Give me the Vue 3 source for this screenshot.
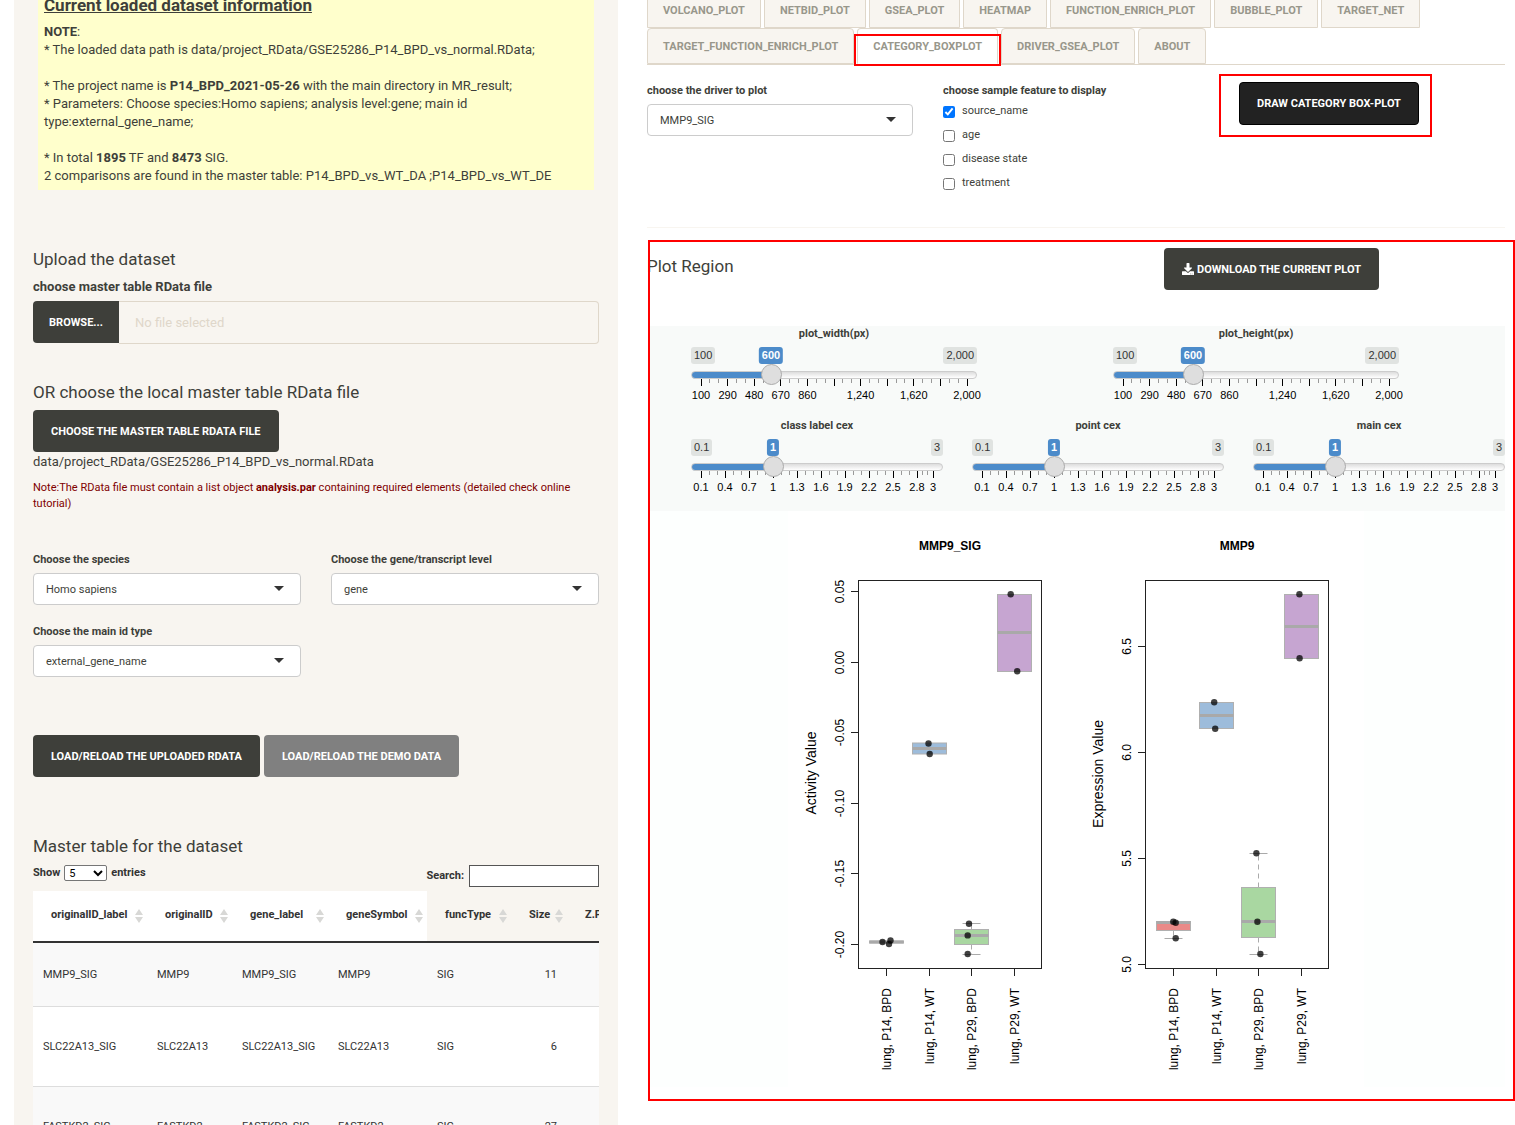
<script setup>
import { ref } from 'vue'

const tabs = [
  'VOLCANO_PLOT', 'NETBID_PLOT', 'GSEA_PLOT', 'HEATMAP', 'FUNCTION_ENRICH_PLOT', 'BUBBLE_PLOT',
  'TARGET_NET', 'TARGET_FUNCTION_ENRICH_PLOT', 'CATEGORY_BOXPLOT', 'DRIVER_GSEA_PLOT', 'ABOUT'
]
const activeTab = ref('CATEGORY_BOXPLOT')

const features = ref([
  { name: 'source_name', on: true },
  { name: 'age', on: false },
  { name: 'disease state', on: false },
  { name: 'treatment', on: false }
])

const columns = [
  { name: 'originalID_label', width: 114 },
  { name: 'originalID', width: 85 },
  { name: 'gene_label', width: 96 },
  { name: 'geneSymbol', width: 99 },
  { name: 'funcType', width: 84 },
  { name: 'Size', width: 56 },
  { name: 'Z.P', width: 80 }
]
const rows = [
  ['MMP9_SIG', 'MMP9', 'MMP9_SIG', 'MMP9', 'SIG', '11', ''],
  ['SLC22A13_SIG', 'SLC22A13', 'SLC22A13_SIG', 'SLC22A13', 'SIG', '6', ''],
  ['FASTKD2_SIG', 'FASTKD2', 'FASTKD2_SIG', 'FASTKD2', 'SIG', '27', '']
]

const fmt = (n) => n.toLocaleString('en-US')

function scale(min, max, step, hidden) {
  const majors = []
  for (let v = min; v < max - step / 10; v += step) majors.push(Math.round(v * 10) / 10)
  majors.push(max)
  const pct = (v) => ((v - min) / (max - min)) * 100
  const ticks = []
  majors.forEach((v, i) => {
    ticks.push({ x: pct(v), major: true, text: hidden.includes(v) ? '' : fmt(v) })
    if (i < majors.length - 1) {
      const gap = (majors[i + 1] - v) / 3
      ticks.push({ x: pct(v + gap), major: false, text: '' })
      ticks.push({ x: pct(v + 2 * gap), major: false, text: '' })
    }
  })
  return ticks
}
const pxTicks = scale(100, 2000, 190, [1050, 1430, 1810])
const cexTicks = scale(0.1, 3, 0.3, [])

const sliderRows = ref([
  {
    kind: 'px',
    items: [
      { id: 'pw', label: 'plot_width(px)', min: 100, max: 2000, step: 1, value: 600, ticks: pxTicks },
      { id: 'ph', label: 'plot_height(px)', min: 100, max: 2000, step: 1, value: 600, ticks: pxTicks }
    ]
  },
  {
    kind: 'cex',
    items: [
      { id: 'cc', label: 'class label cex', min: 0.1, max: 3, step: 0.1, value: 1, ticks: cexTicks },
      { id: 'pc', label: 'point cex', min: 0.1, max: 3, step: 0.1, value: 1, ticks: cexTicks },
      { id: 'mc', label: 'main cex', min: 0.1, max: 3, step: 0.1, value: 1, ticks: cexTicks }
    ]
  }
])
const frac = (s) => (s.value - s.min) / (s.max - s.min)

const groups = ['lung, P14, BPD', 'lung, P14, WT', 'lung, P29, BPD', 'lung, P29, WT']
const groupX = [98.5, 141.5, 183.5, 226.5]
const fills = ['#ea8a88', '#9dbcdb', '#a9d7a1', '#c6a5d1']

const plots = [
  {
    title: 'MMP9_SIG', axis: 'Activity Value', dx: 0, axisY: 262,
    ticks: [[80.5, '0.05'], [151.5, '0.00'], [221.5, '-0.05'], [292.5, '-0.10'], [362.5, '-0.15'], [433.5, '-0.20']],
    boxes: [
      { top: 430, bottom: 432, mid: 431, lo: 0, hi: 0, pts: [[94.5, 431], [102.5, 429.5], [101, 433]] },
      { top: 232, bottom: 243, mid: 237.5, lo: 0, hi: 0, pts: [[140.5, 232.5], [141.7, 243]] },
      { top: 418.5, bottom: 433.5, mid: 424.5, lo: 443.5, hi: 412.5, pts: [[181, 412.8], [179.7, 424.4], [179.7, 443]] },
      { top: 83.5, bottom: 160.5, mid: 121.5, lo: 0, hi: 0, pts: [[222.7, 83.2], [229.2, 160.3]] }
    ]
  },
  {
    title: 'MMP9', axis: 'Expression Value', dx: 287, axisY: 263,
    ticks: [[135.5, '6.5'], [241.5, '6.0'], [347.5, '5.5'], [453.5, '5.0']],
    boxes: [
      { top: 410.5, bottom: 419.5, mid: 411.5, lo: 427.5, hi: 0, pts: [[98.3, 410.7], [100.7, 411.7], [100.7, 427.3]] },
      { top: 191.5, bottom: 217.5, mid: 204.5, lo: 0, hi: 0, pts: [[139.2, 191.3], [140.2, 217.7]] },
      { top: 376.5, bottom: 426.5, mid: 410.5, lo: 443.5, hi: 342.5, pts: [[181.4, 342.3], [182.4, 410.7], [185.4, 443]] },
      { top: 83.5, bottom: 147.5, mid: 115.5, lo: 0, hi: 0, pts: [[224.4, 83.3], [224.6, 147.3]] }
    ]
  }
]
</script>

<template>
  <div class="page">
    <aside class="side">
      <div class="info">
        <h4>Current loaded dataset information</h4>
        <p>
          <b>NOTE</b>:<br>
          * The loaded data path is data/project_RData/GSE25286_P14_BPD_vs_normal.RData;<br>
          <br>
          * The project name is <b>P14_BPD_2021-05-26</b> with the main directory in MR_result;<br>
          * Parameters: Choose species:Homo sapiens; analysis level:gene; main id<br>
          type:external_gene_name;<br>
          <br>
          * In total <b>1895</b> TF and <b>8473</b> SIG.<br>
          2 comparisons are found in the master table: P14_BPD_vs_WT_DA ;P14_BPD_vs_WT_DE
        </p>
      </div>

      <h3 class="upload-title">Upload the dataset</h3>
      <label class="file-label" for="file-name">choose master table RData file</label>
      <div class="file-row">
        <button class="btn browse">Browse...</button>
        <input id="file-name" type="text" placeholder="No file selected" readonly>
      </div>

      <h3 class="local-title">OR choose the local master table RData file</h3>
      <button class="btn">Choose the master table RData file</button>
      <p class="path">data/project_RData/GSE25286_P14_BPD_vs_normal.RData</p>
      <p class="warn">Note:The RData file must contain a list object <b>analysis.par</b> containing required elements (detailed check online tutorial)</p>

      <div class="choices">
        <div class="field">
          <label for="species">Choose the species</label>
          <div class="select"><select id="species"><option>Homo sapiens</option></select></div>
        </div>
        <div class="field">
          <label for="level">Choose the gene/transcript level</label>
          <div class="select"><select id="level"><option>gene</option></select></div>
        </div>
        <div class="field">
          <label for="idtype">Choose the main id type</label>
          <div class="select"><select id="idtype"><option>external_gene_name</option></select></div>
        </div>
      </div>

      <div class="load-row">
        <button class="btn">Load/Reload the uploaded RData</button>
        <button class="btn demo">Load/Reload the demo data</button>
      </div>

      <h3 class="table-title">Master table for the dataset</h3>
      <div class="table-tools">
        <label class="length">Show <select><option>5</option></select> entries</label>
        <label class="search">Search: <input type="search"></label>
      </div>
      <div class="table-wrap">
        <table>
          <colgroup>
            <col v-for="c in columns" :key="c.name" :style="{ width: c.width + 'px' }">
          </colgroup>
          <thead>
            <tr>
              <th v-for="(c, i) in columns" :key="c.name" :class="{ frozen: i < 4 }">
                {{ c.name }}
                <svg v-if="i < 6" class="sort" viewBox="0 0 8 14"><path d="M4 0 8 6H0ZM0 8H8L4 14Z" /></svg>
              </th>
            </tr>
          </thead>
          <tbody>
            <tr v-for="r in rows" :key="r[0]">
              <td v-for="(v, i) in r" :key="i" :class="{ num: i === 5 }">{{ v }}</td>
            </tr>
          </tbody>
        </table>
      </div>
    </aside>

    <main>
      <ul class="tabs">
        <li v-for="t in tabs" :key="t" :class="{ active: t === activeTab }">
          <a href="#" @click.prevent="activeTab = t">{{ t }}</a>
        </li>
      </ul>

      <div class="controls">
        <div class="field">
          <label for="driver">choose the driver to plot</label>
          <div class="select"><select id="driver"><option>MMP9_SIG</option></select></div>
        </div>
        <fieldset>
          <legend>choose sample feature to display</legend>
          <label v-for="f in features" :key="f.name"><input v-model="f.on" type="checkbox"><span>{{ f.name }}</span></label>
        </fieldset>
        <div class="draw">
          <button class="btn">Draw Category box-plot</button>
        </div>
      </div>
      <hr>

      <section class="plot">
        <header>
          <h3>Plot Region</h3>
          <div>
            <button class="btn download">
              <svg viewBox="0 0 512 512"><path fill-rule="evenodd" d="M216 0h80c13.300 0 24 10.700 24 24v168h87.700c17.800 0 26.700 21.500 14.100 34.100L269.700 378.300c-7.500 7.500-19.800 7.500-27.300 0L90.100 226.100c-12.600-12.600-3.700-34.100 14.100-34.100H192V24c0-13.300 10.700-24 24-24zm296 376v112c0 13.300-10.700 24-24 24H24c-13.300 0-24-10.700-24-24V376c0-13.300 10.700-24 24-24h146.700l49 49c20.100 20.100 52.500 20.100 72.600 0l49-49H488c13.300 0 24 10.700 24 24zm-124 88a20 20 0 1 0-40 0 20 20 0 0 0 40 0zm64 0a20 20 0 1 0-40 0 20 20 0 0 0 40 0z" /></svg>
              Download the current plot
            </button>
          </div>
        </header>

        <div class="sliders">
          <div v-for="row in sliderRows" :key="row.kind" class="slider-row" :class="row.kind">
            <div v-for="s in row.items" :key="s.id" class="slider">
              <label :for="s.id">{{ s.label }}</label>
              <div class="badges">
                <span class="badge">{{ fmt(s.min) }}</span>
                <span class="badge">{{ fmt(s.max) }}</span>
                <span class="rail"><output class="badge value" :style="{ left: frac(s) * 100 + '%' }">{{ fmt(s.value) }}</output></span>
              </div>
              <input :id="s.id" v-model.number="s.value" type="range" :min="s.min" :max="s.max" :step="s.step" :style="{ '--f': frac(s) }">
              <svg class="scale">
                <g v-for="(t, i) in s.ticks" :key="i">
                  <line :x1="t.x + '%'" :x2="t.x + '%'" y1="0" :y2="t.major ? 7 : 4" :class="{ major: t.major }" />
                  <text v-if="t.text" :x="t.x + '%'" y="20">{{ t.text }}</text>
                </g>
              </svg>
            </div>
          </div>
        </div>

        <div class="figure">
          <svg viewBox="0 0 576 576" width="576" height="576">
            <g v-for="p in plots" :key="p.title" :transform="`translate(${p.dx} 0)`">
              <text class="title" x="162" y="39">{{ p.title }}</text>
              <text class="axis" :transform="`translate(28 ${p.axisY}) rotate(-90)`">{{ p.axis }}</text>
              <g v-for="t in p.ticks" :key="t[1]">
                <line class="ink" x1="63" x2="70" :y1="t[0]" :y2="t[0]" />
                <text :transform="`translate(56 ${t[0]}) rotate(-90)`">{{ t[1] }}</text>
              </g>
              <g v-for="(b, i) in p.boxes" :key="i">
                <g v-if="b.hi">
                  <line class="dash" :x1="groupX[i]" :x2="groupX[i]" :y1="b.top" :y2="b.hi" />
                  <line class="whisker" :x1="groupX[i] - 9" :x2="groupX[i] + 9" :y1="b.hi" :y2="b.hi" />
                </g>
                <g v-if="b.lo">
                  <line class="dash" :x1="groupX[i]" :x2="groupX[i]" :y1="b.bottom" :y2="b.lo" />
                  <line class="whisker" :x1="groupX[i] - 9" :x2="groupX[i] + 9" :y1="b.lo" :y2="b.lo" />
                </g>
                <rect class="box" :x="groupX[i] - 17" :y="b.top" width="34" :height="b.bottom - b.top" :fill="fills[i]" />
                <line class="median" :x1="groupX[i] - 17" :x2="groupX[i] + 17" :y1="b.mid" :y2="b.mid" />
                <circle v-for="(c, k) in b.pts" :key="k" :cx="c[0]" :cy="c[1]" r="3.200" />
                <line class="ink" :x1="groupX[i]" :x2="groupX[i]" y1="457" y2="465" />
                <text class="group" :transform="`translate(${groupX[i] + 4} 477) rotate(-90)`">{{ groups[i] }}</text>
              </g>
              <rect class="frame" x="70.500" y="69.500" width="183" height="388" />
            </g>
          </svg>
        </div>
      </section>
    </main>
  </div>
</template>

<style>
html, body { background: #fff; }
</style>

<style scoped>
.page {
  display: grid;
  grid-template-columns: minmax(0, 604fr) minmax(0, 858fr);
  gap: 29px;
  height: 100vh;
  padding: 0 10px 0 14px;
  box-sizing: border-box;
  overflow: hidden;
  font: 13px/18px Roboto, sans-serif;
  color: #3e3f3a;
}
.page *, .page *::before, .page *::after { box-sizing: border-box; }
h3, h4, p, ul, fieldset { margin: 0; padding: 0; }
b { font-weight: 700; }
h3 { font-size: 17px; line-height: 20px; font-weight: 400; }
button, input, select { font-family: inherit; }

.side { padding: 0 19px; background: #f8f5f0; }
.info { margin: -19px 5px 0; padding: 14px 6px 5px; background: #ffffcc; }
.info h4 { margin-bottom: 8px; font-size: 17px; line-height: 20px; font-weight: 700; text-decoration: underline; }

.btn {
  height: 42px;
  padding: 0 17px;
  border: 1px solid transparent;
  border-radius: 4px;
  background: #3e3f3a;
  color: #fff;
  font-size: 11px;
  font-weight: 700;
  text-transform: uppercase;
  white-space: nowrap;
}
.upload-title { margin-top: 59px; }
.file-label { display: block; margin-top: 9px; font-weight: 700; }
.file-row { display: flex; margin-top: 5px; }
.browse { width: 86px; padding: 0; border-radius: 4px 0 0 4px; }
.file-row input {
  flex: 1;
  min-width: 0;
  height: 43px;
  padding: 0 16px;
  border: 1px solid #dfd7ca;
  border-left: 0;
  border-radius: 0 4px 4px 0;
  background: transparent;
  font-size: 13px;
}
.file-row input::placeholder { color: #dfd7ca; opacity: 1; }
.local-title { margin: 38px 0 8px; }
.path { margin-top: 1px; }
.warn { margin-top: 9px; font-size: 11px; line-height: 16px; color: #800000; }

.choices { display: grid; grid-template-columns: 1fr 1fr; gap: 18px 30px; margin-top: 39px; }
.field label { display: block; margin-bottom: 5px; font-size: 11px; line-height: 17px; font-weight: 700; }
.select { position: relative; }
.select::after {
  content: "";
  position: absolute;
  right: 17px;
  top: 13px;
  border: 5px solid transparent;
  border-top-color: #333;
  border-bottom-width: 0;
}
.select select {
  display: block;
  width: 100%;
  height: 32px;
  padding: 0 12px;
  appearance: none;
  border: 1px solid #ccc;
  border-radius: 4px;
  background: #fff;
  color: #3e3f3a;
  font-size: 11px;
}
.load-row { display: flex; gap: 4px; margin-top: 58px; }
.demo { background: #808080; }
.table-title { margin-top: 59px; }
.table-tools { display: flex; justify-content: space-between; margin-top: 9px; font-size: 11px; font-weight: 700; color: #333; }
.length { height: 16px; display: flex; align-items: center; gap: 4px; }
.length select { width: 43px; height: 16px; padding: 0; border: 1px solid #767676; border-radius: 2px; background: #fff; font-size: 11px; }
.search { display: flex; align-items: center; gap: 5px; }
.search input { width: 130px; height: 22px; border: 1px solid #555; background: #fff; }
.table-wrap { margin-top: 4px; overflow: hidden; }
table { table-layout: fixed; width: 614px; border-collapse: separate; border-spacing: 0; font-size: 11px; }
th { position: relative; height: 52px; padding: 0 0 2px 18px; border-bottom: 2px solid #333; text-align: left; white-space: nowrap; color: #333; }
th.frozen { background: #fff; }
.sort { position: absolute; right: 4px; top: 18px; width: 8px; height: 14px; fill: #d8d8d6; }
td { height: 80px; padding: 0 10px; border-bottom: 1px solid #ddd; background: #fff; color: #333; }
tr:first-child td { height: 64px; }
tr:nth-child(odd) td { background: #f9f9f9; }
.num { text-align: right; }

.tabs { display: flex; flex-wrap: wrap; margin-top: -8px; border-bottom: 1px solid #dfd7ca; list-style: none; }
.tabs li { position: relative; margin-right: 3px; }
.tabs a {
  display: block;
  height: 36px;
  padding: 0 15px;
  border: 1px solid #dfd7ca;
  border-radius: 4px 4px 0 0;
  background: #f8f5f0;
  color: #98978b;
  font-size: 11px;
  line-height: 35px;
  font-weight: 700;
  text-decoration: none;
}
.tabs .active a { background: #fff; border-bottom-color: #fff; }
.tabs .active::after { content: ""; position: absolute; inset: 6px -3px -2px; border: 2px solid #f00; pointer-events: none; }

.controls { display: grid; grid-template-columns: 1fr 1fr 1fr; gap: 30px; padding-top: 17px; height: 162px; }
fieldset { border: 0; min-width: 0; }
legend { padding: 0; font-size: 11px; line-height: 17px; font-weight: 700; }
fieldset label { display: flex; align-items: center; gap: 7px; height: 24px; font-size: 11px; }
fieldset input { width: 12px; height: 12px; margin: 2px 0 0; }
.draw { position: relative; justify-self: start; align-self: start; }
.draw .btn { display: block; height: 43px; border-color: #000; background: #222; }
.draw::after { content: ""; position: absolute; inset: -8px -13px -12px -20px; border: 2px solid #f00; pointer-events: none; }
hr { margin: 0; border: 0; border-top: 1px solid #f8f5f0; }

.plot { position: relative; margin-top: 12px; padding: 8px 0 14px; }
.plot::after { content: ""; position: absolute; inset: 0 -10px 0 1px; border: 2px solid #f00; pointer-events: none; }
.plot header { display: grid; grid-template-columns: 517fr 341fr; align-items: start; height: 78px; }
.plot h3 { margin-top: 8px; }
.download { display: flex; align-items: center; gap: 3px; }
.download svg { width: 12px; height: 12px; fill: #fff; }

.sliders { margin-left: 3px; padding: 0 0 1px 41px; background: #f8faf9; }
.slider-row { display: grid; height: 92px; }
.px { grid-template-columns: 1fr 1fr; column-gap: 136px; padding-right: 106px; }
.cex { grid-template-columns: 1fr 1fr 1fr; column-gap: 29px; }
.slider { min-width: 0; }
.slider label { display: block; margin-bottom: 5px; font-size: 11px; line-height: 16px; font-weight: 700; text-align: center; }
.badges { position: relative; display: flex; justify-content: space-between; font: 11px/17px "Liberation Sans", sans-serif; }
.badge { padding: 0 3px; border-radius: 3px; background: #e0e3e1; color: #333; }
.rail { position: absolute; left: 10px; right: 10px; top: 0; }
.value { position: absolute; transform: translateX(-50%); background: #4c8bca; color: #fff; font-weight: 700; }
.slider input {
  position: relative;
  z-index: 1;
  display: block;
  width: 100%;
  height: 21px;
  margin: 0;
  appearance: none;
  background: transparent;
}
.slider input::-webkit-slider-runnable-track {
  height: 8px;
  border: 1px solid #ccc;
  border-radius: 8px;
  background: linear-gradient(#4c8bca, #4c8bca) 0 0 / calc(10px + var(--f) * (100% - 20px)) 100% no-repeat border-box, linear-gradient(#ddd, #fff);
}
.slider input::-webkit-slider-thumb {
  appearance: none;
  width: 21px;
  height: 21px;
  margin-top: -8px;
  border: 1px solid #ababab;
  border-radius: 50%;
  background: #dedede;
}
.scale { display: block; width: calc(100% - 20px); height: 23px; margin: -6px 10px 0; overflow: visible; font: 11px "Liberation Sans", sans-serif; fill: #000; text-anchor: middle; }
.scale line { stroke: #999; shape-rendering: crispEdges; }
.scale .major { stroke: #000; }

.figure { display: flex; justify-content: center; background: #fdfffe; }
.figure svg { display: block; background: #fff; font: 12px "Liberation Sans", sans-serif; text-anchor: middle; }
.figure .title { font-weight: 700; }
.figure .axis { font-size: 14px; }
.figure .group { text-anchor: end; }
.ink { stroke: #222; }
.frame { fill: none; stroke: #222; }
.box { stroke: #b0b0b0; }
.median { stroke: #a9a9a9; stroke-width: 3; }
.whisker { stroke: #aaa; }
.dash { stroke: #aaa; stroke-dasharray: 5 4; }
circle { fill: #000; fill-opacity: 0.75; }
</style>
